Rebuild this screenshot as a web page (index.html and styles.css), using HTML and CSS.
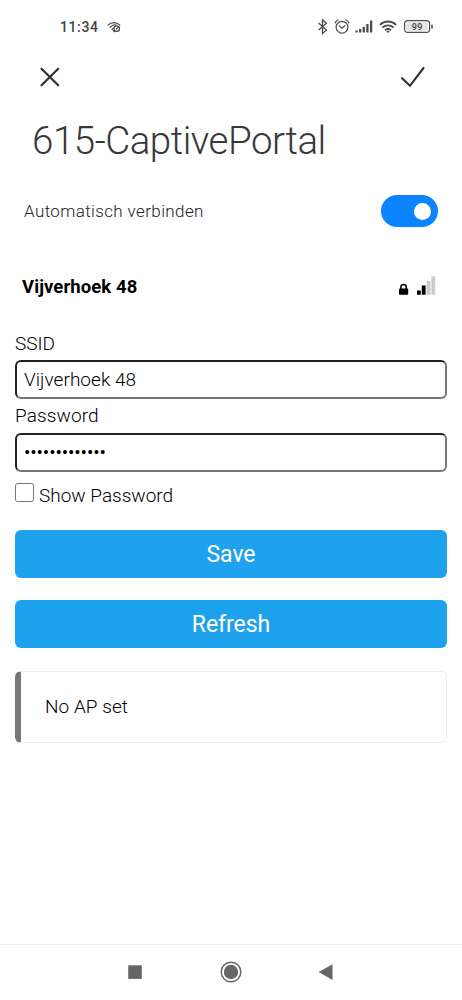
FILE: index.html
```html
<!DOCTYPE html>
<html lang="nl">
<head>
<meta charset="utf-8">
<title>615-CaptivePortal</title>
<link rel="stylesheet" href="styles.css">
</head>
<body>
<div class="screen">
  <div class="status">
    <span class="clock">11:34</span>
    <svg class="status-link" width="14" height="12" viewBox="0 0 14 12" fill="none" stroke="#444" stroke-width="1.2" stroke-linecap="round"><path d="M1 4.2C4.4.8 9.5.8 12.8 4.2M3 6.3C5 4.1 7.5 3.6 9.5 4.2M5 8.3C5.6 7.4 6 7 6.6 7M6.2 9.5l1.5 1.2"/><circle cx="9.8" cy="7.7" r="2.7"/><path d="M9.4 8.1l2-2.2"/></svg>
    <svg class="status-icons" width="116" height="18" viewBox="317 18 116 18" fill="none" stroke="#4c4c4c">
      <path d="M318.6 23.1l7.8 6.8-3.9 3.7V19.8l3.9 3.4-7.8 6.8" stroke-width="1.3"/>
      <circle cx="342" cy="27.2" r="5.9" stroke-width="1.2"/>
      <path d="M335.3 22.8c.4-1.3 1.5-2.4 2.8-2.8M348.7 22.8c-.4-1.3-1.5-2.4-2.8-2.8M339.5 26l2.5 2.2 2.8-2.2" stroke-width="1.3" stroke-linecap="round"/>
      <path d="M356.6 32.5v-2M360.2 32.5v-3.6M363.8 32.5v-5.8M367.4 32.5v-8.5M371.1 32.5V20.5" stroke-width="2.3"/>
      <path d="M379.8 24.8c4.8-4.4 11.6-4.4 16.4 0M382.4 27.6c3.3-3 7.9-3 11.2 0M385 30.2c1.8-1.5 4.2-1.5 6 0" stroke-width="1.8"/>
      <path d="M386.2 31.3l1.8 1.8 1.8-1.8q-1.8-1-3.6 0z" fill="#4c4c4c" stroke="none"/>
      <rect x="404.6" y="20.6" width="25" height="11.8" rx="3.2" stroke-width="1.2"/>
      <rect x="406.3" y="22.3" width="21.6" height="8.4" rx="1.6" fill="#e2e2e2" stroke="none"/>
      <path d="M432 24.8v3.6" stroke-width="1.6"/>
      <text class="battery" x="417.2" y="30" text-anchor="middle">99</text>
    </svg>
  </div>
  <div class="actions">
    <svg width="22" height="22" viewBox="0 0 22 22" fill="none" stroke="#333" stroke-width="2.2" stroke-linecap="round"><path d="M2.5 2.7l16.7 16.6M19.2 2.7L2.5 19.3"/></svg>
    <svg width="26" height="22" viewBox="0 0 26 22" fill="none" stroke="#303030" stroke-width="2.1" stroke-linecap="round"><path d="M2 12.2l8 7.6L23.5 2"/></svg>
  </div>
  <h1 class="title">615-CaptivePortal</h1>
  <div class="auto">
    <span class="auto-label">Automatisch verbinden</span>
    <span class="switch"><span class="knob"></span></span>
  </div>
  <div class="network">
    <span class="network-name">Vijverhoek 48</span>
    <svg width="38" height="20" viewBox="398 276 38 20">
      <path d="M400.9 289v-1.9a2.7 2.7 0 0 1 5.4 0V289" fill="none" stroke="#000" stroke-width="1.5"/>
      <rect x="399" y="288.4" width="9.2" height="6.4" rx=".8"/>
      <path d="M417 290.5h3.8v4.3H417zM421.8 285.5h3.8v9.3h-3.8z"/>
      <path d="M426.6 281h3.8v13.8h-3.8zM431.4 276.2h3.8v18.6h-3.8z" fill="#ccc"/>
    </svg>
  </div>
  <form class="form">
    <label class="label" for="ssid">SSID</label>
    <input class="field" id="ssid" type="text" value="Vijverhoek 48">
    <label class="label label-password" for="pw">Password</label>
    <input class="field field-password" id="pw" type="password" value="1234567890123">
    <label class="show"><input class="check" type="checkbox"><span>Show Password</span></label>
    <button class="button" type="button">Save</button>
    <button class="button" type="button">Refresh</button>
    <div class="message">No AP set</div>
  </form>
  <div class="nav">
    <svg width="16" height="24" viewBox="0 0 16 24"><path d="M1.2 5.3h13.6v13.6H1.2z" fill="#666"/></svg>
    <svg width="24" height="24" viewBox="0 0 24 24"><circle cx="12" cy="12" r="9.8" fill="none" stroke="#666" stroke-width="1.4"/><circle cx="12" cy="12" r="7.2" fill="#666"/></svg>
    <svg width="16" height="24" viewBox="0 0 16 24"><path d="M1.2 12L14.2 4.7v14.8z" fill="#666" stroke="#666" stroke-width=".6" stroke-linejoin="round"/></svg>
  </div>
</div>
</body>
</html>
```
FILE: styles.css
```css
* { box-sizing: border-box; }
body { margin: 0; background: #fefefe; color: #000; font-family: Roboto, "Liberation Sans", sans-serif; font-weight: 300; }
.screen { width: 462px; height: 1000px; display: flex; flex-direction: column; }
.status { height: 54px; padding: 0 29px 0 60px; display: flex; align-items: center; color: #444; }
.clock { font-size: 14px; font-weight: 500; letter-spacing: 0.6px; }
.status-link { margin-left: 8px; }
.status-icons { margin-left: auto; }
.battery { font-size: 9px; font-weight: 500; fill: #444; stroke: none; letter-spacing: .3px; }
.actions { height: 46px; padding: 0 36px 0 39px; display: flex; align-items: center; justify-content: space-between; }
.title { margin: 0; height: 80px; padding-left: 32px; font-size: 38.5px; font-weight: 300; line-height: 81px; color: #383838; letter-spacing: -.48px; white-space: nowrap; }
.auto { height: 62px; padding: 0 24px; display: flex; align-items: center; justify-content: space-between; }
.auto-label { font-size: 17px; color: #222; letter-spacing: .38px; }
.switch { width: 57px; height: 32px; border-radius: 16px; background: #0d84ff; display: flex; align-items: center; justify-content: flex-end; padding-right: 7px; }
.knob { width: 17px; height: 17px; border-radius: 50%; background: #fff; }
.network { height: 88px; padding: 0 26px 0 22px; display: flex; align-items: center; justify-content: space-between; }
.network-name { padding-top: 2px; font-size: 18.5px; font-weight: 700; letter-spacing: .08px; }
.form { flex: 1; padding: 0 15px; display: flex; flex-direction: column; }
.label { height: 30px; line-height: 27px; font-size: 19px; }
.label-password { height: 34px; line-height: 34px; letter-spacing: .1px; }
.field { width: 432px; height: 39px; border: 2px inset #767676; border-radius: 6px; padding: 0 7px; font-family: inherit; font-weight: inherit; font-size: 19px; background: #fff; color: #000; outline: none; letter-spacing: .05px; }
.field-password { letter-spacing: -.12px; font-weight: 400; }
.show { height: 42px; margin: 2px 0 2px; display: flex; align-items: center; gap: 5px; font-size: 19px; letter-spacing: 0; }
.check { margin: 0 0 5px; width: 19px; height: 19px; }
.button { height: 48px; margin: 12px 0 10px; flex: none; border: 0; border-radius: 6px; background: #1fa2ee; color: #fff; font-family: inherit; font-size: 23px; letter-spacing: -.05px; }
.message { height: 72px; margin-top: 13px; border: 1px solid #eee; border-left: 6px solid #777; border-radius: 6px; padding-left: 24px; font-size: 19px; line-height: 70px; letter-spacing: .05px; }
.nav { height: 56px; border-top: 1px solid #eee; padding: 0 128px 1px 127px; display: flex; align-items: center; justify-content: space-between; }
```
